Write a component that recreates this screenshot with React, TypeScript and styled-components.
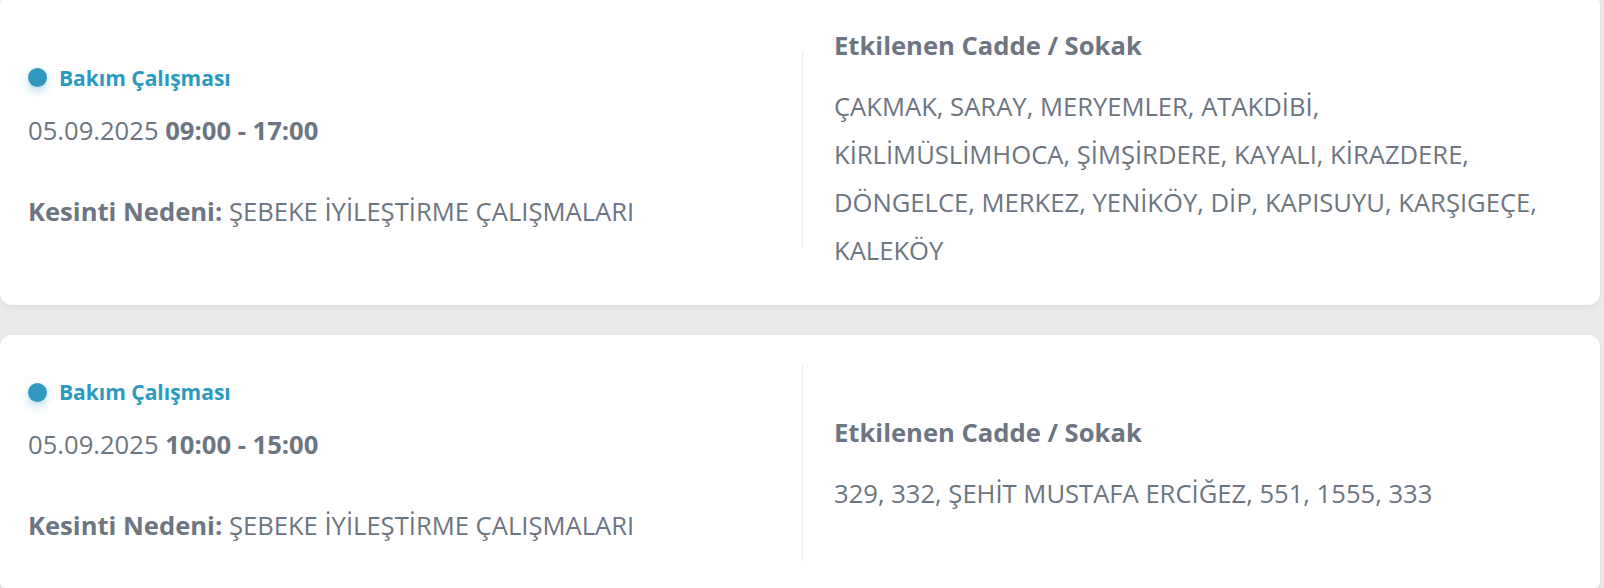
import styled, { createGlobalStyle } from "styled-components";

const GlobalStyle = createGlobalStyle`
    html, body {
        margin: 0;
        padding: 0;
        background: #e9eaec;
        font-family: "Open Sans", "Noto Sans", sans-serif;
    }
`;

const List = styled.div`
    display: flex;
    flex-direction: column;
    gap: 30px;
    margin-top: -7px;
    padding-right: 4px;
`;

const Card = styled.div`
    display: flex;
    align-items: center;
    background: #ffffff;
    border-radius: 12px;
    box-shadow: 0 2px 6px rgba(0, 0, 0, 0.05);
    padding: 30px 55px 30px 28px;
`;

const LeftCol = styled.div`
    box-sizing: border-box;
    flex: none;
    width: 775px;
    border-right: 1px solid #ececec;
    padding: 12px 0 18px;
    color: #6c7580;
`;

const Tag = styled.div`
    display: flex;
    align-items: center;
    gap: 12px;
    height: 30px;
    font-size: 21px;
    font-weight: 700;
    color: #2b9abf;
`;

const Dot = styled.span`
    width: 19px;
    height: 19px;
    border-radius: 50%;
    background: #3199c0;
    box-shadow: 0 4px 8px rgba(49, 153, 192, 0.35);
`;

const DateLine = styled.div`
    margin-top: 20px;
    font-size: 25.6px;
    line-height: 36px;

    & > b {
        font-weight: 700;
    }
`;

const Reason = styled.div`
    margin-top: 45px;
    font-size: 25.6px;
    line-height: 36px;

    & > b {
        font-weight: 700;
    }
`;

const RightCol = styled.div`
    flex: 1;
    padding: 5px 0 0 31px;
    color: #6c7580;
`;

const Heading = styled.div`
    font-size: 25.6px;
    font-weight: 700;
    line-height: 36px;
    margin-bottom: 19px;
`;

const Streets = styled.div`
    font-size: 25.6px;
    line-height: 48px;
`;

type Outage = {
    date: string;
    time: string;
    reason: string;
    streets: string;
};

const outages: Outage[] = [
    {
        date: "05.09.2025",
        time: "09:00 - 17:00",
        reason: "ŞEBEKE İYİLEŞTİRME ÇALIŞMALARI",
        streets:
            "ÇAKMAK, SARAY, MERYEMLER, ATAKDİBİ, KİRLİMÜSLİMHOCA, ŞİMŞİRDERE, KAYALI, KİRAZDERE, DÖNGELCE, MERKEZ, YENİKÖY, DİP, KAPISUYU, KARŞIGEÇE, KALEKÖY",
    },
    {
        date: "05.09.2025",
        time: "10:00 - 15:00",
        reason: "ŞEBEKE İYİLEŞTİRME ÇALIŞMALARI",
        streets: "329, 332, ŞEHİT MUSTAFA ERCİĞEZ, 551, 1555, 333",
    },
];

export default function App() {
    return (
        <>
            <GlobalStyle />
            <List>
                {outages.map((o, index) => (
                    <Card key={index}>
                        <LeftCol>
                            <Tag>
                                <Dot />
                                Bakım Çalışması
                            </Tag>
                            <DateLine>
                                {o.date} <b>{o.time}</b>
                            </DateLine>
                            <Reason>
                                <b>Kesinti Nedeni:</b> {o.reason}
                            </Reason>
                        </LeftCol>
                        <RightCol>
                            <Heading>Etkilenen Cadde / Sokak</Heading>
                            <Streets>{o.streets}</Streets>
                        </RightCol>
                    </Card>
                ))}
            </List>
        </>
    );
}
